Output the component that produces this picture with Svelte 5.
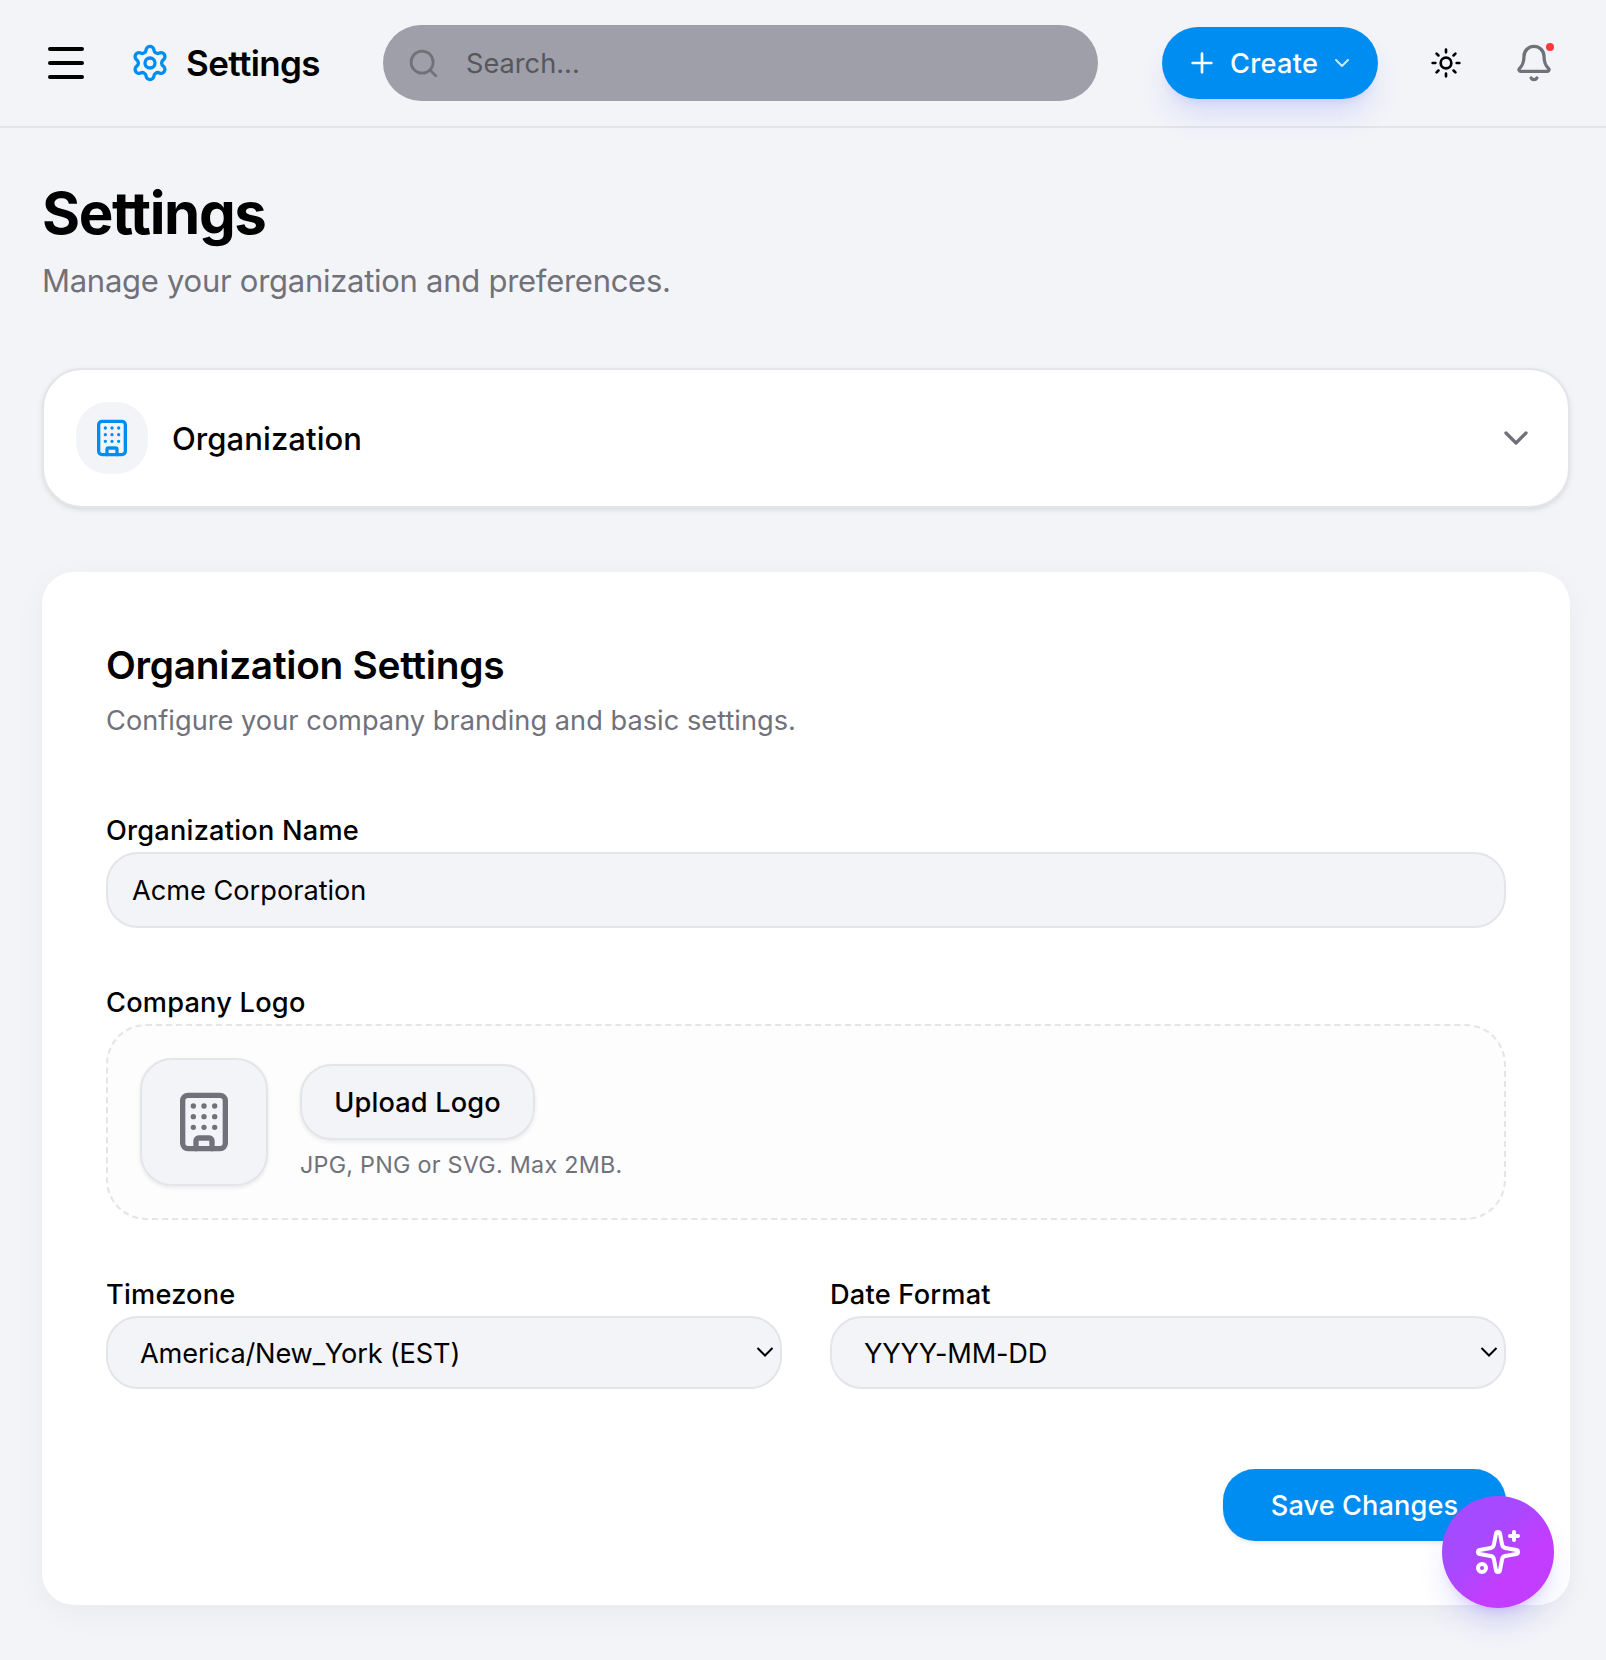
<script lang="ts">
    let search = '';
    let orgName = 'Acme Corporation';
    let timezone = 'America/New_York (EST)';
    let dateFormat = 'YYYY-MM-DD';
    let sectionOpen = false;

    const timezones = [
        'America/New_York (EST)',
        'America/Chicago (CST)',
        'America/Los_Angeles (PST)',
        'Europe/London (GMT)'
    ];
    const dateFormats = ['YYYY-MM-DD', 'MM/DD/YYYY', 'DD/MM/YYYY'];
</script>

<svelte:head>
    <title>Settings</title>
</svelte:head>

{#snippet building(size)}
    <svg class="icon" width={size} height={size} viewBox="0 0 24 24">
        <rect x="4" y="2" width="16" height="20" rx="2" />
        <path d="M9 22v-3a1 1 0 0 1 1-1h4a1 1 0 0 1 1 1v3" />
        <path d="M8 6h.01M12 6h.01M16 6h.01M8 10h.01M12 10h.01M16 10h.01M8 14h.01M12 14h.01M16 14h.01" />
    </svg>
{/snippet}

<div class="app">
    <header>
        <button aria-label="Menu">
            <svg class="icon" width="48" height="48" viewBox="0 0 24 24">
                <path d="M4 5h16M4 12h16M4 19h16" />
            </svg>
        </button>
        <div class="brand">
            <svg class="icon blue" width="40" height="40" viewBox="0 0 24 24">
                <path d="M9.671 4.136a2.34 2.34 0 0 1 4.659 0 2.34 2.34 0 0 0 3.319 1.915 2.34 2.34 0 0 1 2.33 4.033 2.34 2.34 0 0 0 0 3.831 2.34 2.34 0 0 1-2.33 4.033 2.34 2.34 0 0 0-3.319 1.915 2.34 2.34 0 0 1-4.659 0 2.34 2.34 0 0 0-3.32-1.915 2.34 2.34 0 0 1-2.33-4.033 2.34 2.34 0 0 0 0-3.831A2.34 2.34 0 0 1 6.35 6.051a2.34 2.34 0 0 0 3.319-1.915" />
                <circle cx="12" cy="12" r="3" />
            </svg>
            <span class="brand-name">Settings</span>
        </div>

        <label class="search">
            <svg class="icon" width="33" height="33" viewBox="0 0 24 24">
                <circle cx="11" cy="11" r="8" />
                <path d="m21 21-4.34-4.34" />
            </svg>
            <input type="text" placeholder="Search..." bind:value={search} />
        </label>

        <button class="create">
            <svg class="icon" width="32" height="32" viewBox="0 0 24 24">
                <path d="M5 12h14M12 5v14" />
            </svg>
            <span>Create</span>
            <svg class="icon faded" width="24" height="24" viewBox="0 0 24 24">
                <path d="m6 9 6 6 6-6" />
            </svg>
        </button>

        <button class="theme" aria-label="Theme">
            <svg class="icon" width="32" height="32" viewBox="0 0 24 24">
                <circle cx="12" cy="12" r="4" />
                <path d="M12 2v2M12 20v2M4.93 4.93l1.41 1.41M17.66 17.66l1.41 1.41M2 12h2M20 12h2M6.34 17.66l-1.41 1.41M19.07 4.93l-1.41 1.41" />
            </svg>
        </button>
        <button class="bell" aria-label="Notifications">
            <svg class="icon" width="40" height="40" viewBox="0 0 24 24">
                <path d="M10.268 21a2 2 0 0 0 3.464 0" />
                <path d="M3.262 15.326A1 1 0 0 0 4 17h16a1 1 0 0 0 .74-1.673C19.41 13.956 18 12.499 18 8A6 6 0 0 0 6 8c0 4.499-1.411 5.956-2.738 7.326" />
            </svg>
            <span class="dot"></span>
        </button>
    </header>

    <main>
        <h1>Settings</h1>
        <p class="lead">Manage your organization and preferences.</p>

        <button class="section-picker" on:click={() => (sectionOpen = !sectionOpen)}>
            <span class="section-icon">{@render building(40)}</span>
            <span class="section-name">Organization</span>
            <svg class="icon muted" width="40" height="40" viewBox="0 0 24 24">
                <path d="m6 9 6 6 6-6" />
            </svg>
        </button>

        <section class="card">
            <h2>Organization Settings</h2>
            <p class="hint">Configure your company branding and basic settings.</p>

            <div class="field">
                <label for="org-name">Organization Name</label>
                <input id="org-name" type="text" bind:value={orgName} />
            </div>

            <div class="field">
                <span class="label">Company Logo</span>
                <div class="dropzone">
                    <div class="logo">{@render building(64)}</div>
                    <div class="upload">
                        <button class="upload-btn">Upload Logo</button>
                        <small>JPG, PNG or SVG. Max 2MB.</small>
                    </div>
                </div>
            </div>

            <div class="row">
                <div class="field">
                    <label for="timezone">Timezone</label>
                    <div class="select">
                        <select id="timezone" bind:value={timezone}>
                            {#each timezones as tz}
                                <option value={tz}>{tz}</option>
                            {/each}
                        </select>
                        <svg class="caret" width="18" height="12" viewBox="0 0 18 12">
                            <path d="M1.5 2 9 9.5 16.5 2" />
                        </svg>
                    </div>
                </div>
                <div class="field">
                    <label for="date-format">Date Format</label>
                    <div class="select">
                        <select id="date-format" bind:value={dateFormat}>
                            {#each dateFormats as format}
                                <option value={format}>{format}</option>
                            {/each}
                        </select>
                        <svg class="caret" width="18" height="12" viewBox="0 0 18 12">
                            <path d="M1.5 2 9 9.5 16.5 2" />
                        </svg>
                    </div>
                </div>
            </div>

            <div class="actions">
                <button class="save">Save Changes</button>
            </div>
        </section>
    </main>

    <button class="assistant" aria-label="Assistant">
        <svg class="icon" width="48" height="48" viewBox="0 0 24 24">
            <path d="M11.017 2.814a1 1 0 0 1 1.966 0l1.051 5.558a2 2 0 0 0 1.594 1.594l5.558 1.051a1 1 0 0 1 0 1.966l-5.558 1.051a2 2 0 0 0-1.594 1.594l-1.051 5.558a1 1 0 0 1-1.966 0l-1.051-5.558a2 2 0 0 0-1.594-1.594l-5.558-1.051a1 1 0 0 1 0-1.966l5.558-1.051a2 2 0 0 0 1.594-1.594z" />
            <path d="M20 2v4M22 4h-4" />
            <circle cx="4" cy="20" r="2" />
        </svg>
    </button>
</div>

<style>
    :global(body) {
        background: #f3f4f8;
    }

    .app {
        min-height: 1660px;
        background: #f3f4f8;
        color: #000;
        font-family: Inter, 'Liberation Sans', sans-serif;
        font-size: 27.2px;
    }

    .app * {
        box-sizing: border-box;
    }

    button, input, select {
        margin: 0;
        padding: 0;
        border: none;
        outline: none;
        background: none;
        color: inherit;
        font: inherit;
        letter-spacing: inherit;
    }

    button {
        cursor: pointer;
    }

    .icon {
        display: block;
        flex-shrink: 0;
        fill: none;
        stroke: currentColor;
        stroke-width: 2;
        stroke-linecap: round;
        stroke-linejoin: round;
    }

    .blue {
        color: #008df2;
    }

    .muted {
        color: #71717a;
    }

    .faded {
        opacity: 0.8;
    }

    header {
        display: flex;
        align-items: center;
        height: 128px;
        padding: 0 52px 0 42px;
        border-bottom: 2px solid #e4e5e8;
    }

    .brand {
        display: flex;
        align-items: center;
        gap: 16px;
        width: 253px;
        margin-left: 40px;
    }

    .brand-name {
        font-size: 35px;
        font-weight: 600;
        letter-spacing: -0.6px;
    }

    .search {
        display: flex;
        align-items: center;
        gap: 26px;
        width: 715px;
        height: 76px;
        padding: 0 24px;
        border-radius: 38px;
        background: #9f9fa9;
        color: #71717a;
    }

    .search input {
        flex: 1;
        padding-top: 1px;
        color: #000;
    }

    .search input::placeholder {
        color: #55575a;
        opacity: 1;
    }

    .create {
        display: flex;
        align-items: center;
        width: 216px;
        height: 72px;
        margin-left: 64px;
        padding-left: 24px;
        border-radius: 36px;
        background: #008df2;
        color: #fff;
        font-weight: 500;
        letter-spacing: 0.3px;
        box-shadow: 0 20px 30px -6px rgba(70, 90, 255, 0.16), 0 8px 12px -8px rgba(70, 90, 255, 0.2);
    }

    .create span {
        width: 88px;
        margin: 0 12px;
        padding-top: 1px;
        text-align: left;
    }

    .theme {
        margin-left: 52px;
    }

    .bell {
        position: relative;
        margin-left: 52px;
        color: #71717a;
    }

    .dot {
        position: absolute;
        top: 0;
        right: 0;
        width: 8px;
        height: 8px;
        border-radius: 50%;
        background: #ff383c;
    }

    main {
        padding: 48px 36px 0 42px;
    }

    h1, h2, p {
        margin: 0;
    }

    h1 {
        font-size: 58.2px;
        line-height: 74px;
        font-weight: 700;
        letter-spacing: -1.4px;
    }

    .lead {
        margin-top: 7px;
        color: #71717a;
        font-size: 31px;
        line-height: 47px;
        letter-spacing: -0.27px;
    }

    .section-picker {
        display: flex;
        align-items: center;
        gap: 24px;
        width: 100%;
        height: 140px;
        margin: 64px 0;
        padding: 0 32px;
        border: 2px solid #e4e5e8;
        border-radius: 40px;
        background: #fff;
        box-shadow: 0 2px 6px rgba(0, 0, 0, 0.08), 0 2px 4px -2px rgba(0, 0, 0, 0.08);
    }

    .section-icon {
        display: flex;
        align-items: center;
        justify-content: center;
        width: 72px;
        height: 72px;
        border-radius: 32px;
        background: #f3f4f8;
        color: #008df2;
    }

    .section-name {
        flex: 1;
        font-size: 31px;
        font-weight: 500;
        text-align: left;
        letter-spacing: 0.08px;
    }

    .card {
        padding: 64px;
        border-radius: 32px;
        background: #fff;
        box-shadow: 0 8px 32px rgba(0, 0, 0, 0.045);
    }

    h2 {
        font-size: 38.8px;
        line-height: 58px;
        font-weight: 600;
        letter-spacing: -0.27px;
    }

    .hint {
        margin: 7px 0 75px;
        color: #71717a;
        line-height: 40px;
        letter-spacing: 0.02px;
    }

    .field {
        display: flex;
        flex-direction: column;
        gap: 6px;
        margin-bottom: 60px;
    }

    .field label, .label {
        font-weight: 500;
        line-height: 30px;
        letter-spacing: 0.22px;
    }

    .field input, select {
        width: 100%;
        height: 76px;
        padding: 1px 24px 0;
        border: 2px solid #e4e5e8;
        border-radius: 32px;
        background: #f3f4f8;
        letter-spacing: -0.02px;
    }

    .dropzone {
        display: flex;
        align-items: center;
        gap: 32px;
        padding: 32px;
        border: 2px dashed #e4e5e8;
        border-radius: 40px;
        background: #fdfdfd;
    }

    .logo {
        display: flex;
        align-items: center;
        justify-content: center;
        width: 128px;
        height: 128px;
        border: 2px solid #e4e5e8;
        border-radius: 32px;
        background: #f3f4f8;
        color: #71717a;
        box-shadow: 0 2px 4px rgba(0, 0, 0, 0.08);
    }

    .upload {
        display: flex;
        flex-direction: column;
        align-items: flex-start;
        gap: 8px;
    }

    .upload-btn {
        width: 235px;
        height: 76px;
        padding-top: 1px;
        border: 2px solid #e4e5e8;
        border-radius: 32px;
        background: #f3f4f8;
        font-weight: 500;
        letter-spacing: 0.15px;
        box-shadow: 0 2px 4px rgba(0, 0, 0, 0.08);
    }

    small {
        padding-top: 1px;
        color: #71717a;
        font-size: 23.3px;
        line-height: 31px;
        letter-spacing: 0.26px;
    }

    .row {
        display: grid;
        grid-template-columns: 1fr 1fr;
        gap: 48px;
    }

    .row .field {
        margin-bottom: 80px;
    }

    .select {
        position: relative;
    }

    select {
        display: block;
        height: 73px;
        padding: 1px 32px 0;
        appearance: none;
        letter-spacing: -0.18px;
    }

    /* sits on top of the select box */
    .caret {
        position: absolute;
        top: 30px;
        right: 8px;
        fill: none;
        stroke: #000;
        stroke-width: 2;
        pointer-events: none;
    }

    .actions {
        display: flex;
        justify-content: flex-end;
    }

    .save {
        width: 283px;
        height: 72px;
        padding-top: 1px;
        border-radius: 32px;
        background: #008df2;
        color: #fff;
        font-weight: 500;
        letter-spacing: 0.08px;
        box-shadow: 0 2px 4px rgba(0, 0, 0, 0.1);
    }

    .assistant {
        position: fixed;
        right: 52px;
        bottom: 52px;
        display: flex;
        align-items: center;
        justify-content: center;
        width: 112px;
        height: 112px;
        border-radius: 50%;
        background: linear-gradient(135deg, #a64aff 35%, #c23dff 65%);
        color: #fff;
        box-shadow: 0 20px 30px -6px rgba(90, 90, 255, 0.2), 0 8px 12px -8px rgba(173, 70, 255, 0.3);
    }
</style>
